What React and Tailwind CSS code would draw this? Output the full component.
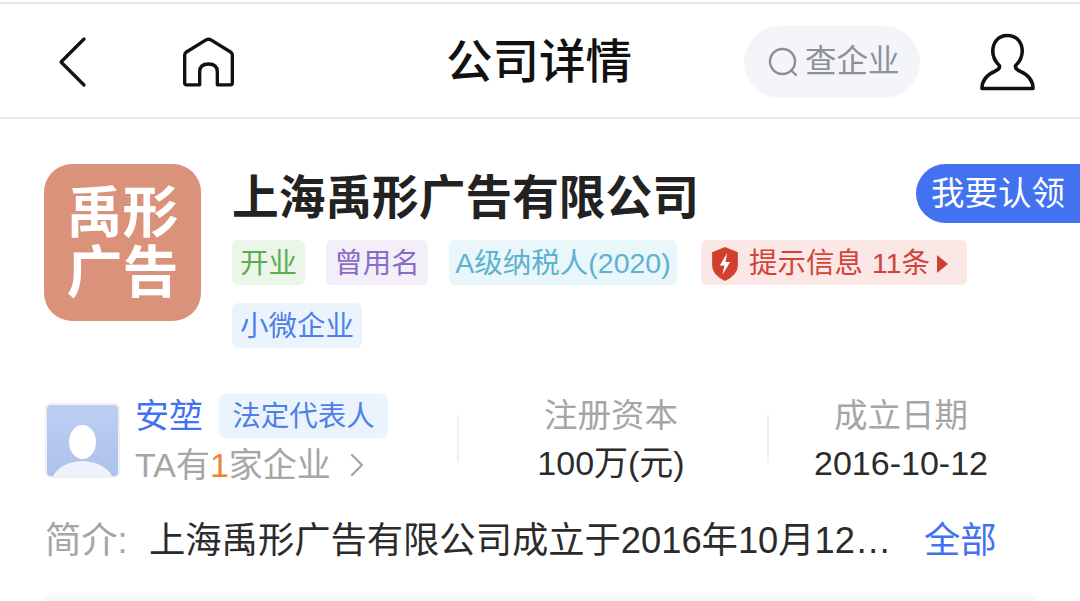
const Tag = ({ className, children }) => (
  <span className={`flex h-[45px] items-center rounded-md pt-[2px] text-[28.5px] leading-none ${className}`}>
    {children}
  </span>
);

const Stat = ({ label, value }) => (
  <div className="flex flex-col items-center pt-[2px]">
    <span className="text-[33.5px] leading-[40px] whitespace-nowrap text-[#a6a6a6]">{label}</span>
    <span className="mt-[7px] text-[34px] leading-[40px] whitespace-nowrap text-[#2b2b2b]">{value}</span>
  </div>
);

const App = () => {
  return (
    <div
      className="h-[601px] w-[1080px] overflow-hidden bg-white"
      style={{ fontFamily: '"Liberation Sans", "Noto Sans CJK SC", sans-serif' }}
    >
      <div className="mt-[2px] h-[2px] bg-[#e8e8e8]" />

      {/* Top nav */}
      <div className="flex h-[115px] items-center border-b-2 border-[#ebebeb] pl-[57px] pt-[3px]">
        <svg width="32" height="52" viewBox="0 0 32 52" fill="none" stroke="#111" strokeWidth="3.2" strokeLinecap="round" strokeLinejoin="round">
          <path d="M27 3 L4 26 L27 49" />
        </svg>
        <svg className="ml-[94px]" width="51" height="50" viewBox="0 0 52 50" fill="none" stroke="#111" strokeWidth="3.4" strokeLinejoin="round">
          <path d="M1.7 18 Q1.7 16 3.5 14.8 L23.5 2.5 Q26 1 28.5 2.5 L48.5 14.8 Q50.3 16 50.3 18 L50.3 46.5 Q50.3 48.3 48.5 48.3 L35 48.3 L35 35 Q35 27 26 27 Q17 27 17 35 L17 48.3 L3.5 48.3 Q1.7 48.3 1.7 46.5 Z" />
        </svg>
        <span className="ml-[212px] w-[188px] text-[46.5px] font-medium leading-none whitespace-nowrap text-[#111]">公司详情</span>
        <div className="ml-[110px] flex h-[72px] w-[176px] items-center rounded-full bg-[#f4f5f9] pl-[24px]">
          <svg width="31" height="31" viewBox="0 0 31 31" fill="none" stroke="#8c8e96" strokeWidth="2.4" strokeLinecap="round">
            <circle cx="14.5" cy="14.5" r="12.5" />
            <path d="M23.5 23.5 L28 28" />
          </svg>
          <span className="ml-[6px] text-[31.5px] leading-none whitespace-nowrap text-[#8f9198]">查企业</span>
        </div>
        <svg className="ml-[59px]" width="57" height="58" viewBox="0 0 58 58" fill="none" stroke="#111" strokeWidth="3.6" strokeLinejoin="round">
          <path d="M29 2 C18 2 14 11 14 18 C14 26 18 30 21 33 C21 36 19 37 16 38.5 C8 42 3 48 3 56 L55 56 C55 48 50 42 42 38.5 C39 37 37 36 37 33 C40 30 44 26 44 18 C44 11 40 2 29 2 Z" />
        </svg>
      </div>

      {/* Company header */}
      <div className="flex pl-[44px] pt-[45px]">
        <div className="flex h-[157px] w-[157px] shrink-0 flex-col items-center justify-center rounded-[28px] bg-[#da927a] text-[56px] font-bold leading-[60px] text-white">
          <span>禹形</span>
          <span>广告</span>
        </div>
        <div className="ml-[31px] min-w-0 flex-1">
          <div className="flex h-[59px] items-start justify-between">
            <span className="mt-[4px] text-[46.7px] font-bold leading-[60px] whitespace-nowrap text-[#222]">上海禹形广告有限公司</span>
            <span className="flex h-[59px] w-[164px] items-center rounded-l-[30px] bg-[#4272f0] pl-[15px] text-[33.5px] leading-none whitespace-nowrap text-white">我要认领</span>
          </div>
          <div className="mt-[17px] flex flex-wrap gap-x-[21px] gap-y-[18px]">
            <Tag className="w-[73px] justify-center bg-[#ebf5ea] text-[#5bae4f]">开业</Tag>
            <Tag className="w-[102px] justify-center bg-[#f2eff8] text-[#8a6cc7]">曾用名</Tag>
            <Tag className="w-[228px] justify-center bg-[#e9f6fa] text-[#5bb3d0]">A级纳税人(2020)</Tag>
            <Tag className="ml-[3px] w-[266px] bg-[#fae7e6] pl-[10px] text-[#d0443a]">
              <svg width="28" height="34" viewBox="0 0 27 33" className="shrink-0">
                <path d="M13.5 0 L26 5 L26 18 Q26 27 13.5 33 Q1 27 1 18 L1 5 Z" fill="#d0402f" />
                <path d="M15.5 6 L8.5 18 L13 18 L11 27 L18.5 14.5 L14 14.5 Z" fill="#fff" />
              </svg>
              <span className="ml-[10px] whitespace-nowrap">提示信息</span>
              <span className="ml-[9px] whitespace-nowrap">11条</span>
              <svg className="ml-[7px] shrink-0" width="11" height="18" viewBox="0 0 11 18">
                <path d="M0 0 L11 9 L0 18 Z" fill="#d0402f" />
              </svg>
            </Tag>
            <Tag className="h-[44px] w-[130px] justify-center bg-[#ebf4fd] text-[#4f7fe8]">小微企业</Tag>
          </div>
        </div>
      </div>

      {/* Legal rep and stats */}
      <div className="mt-[46px] flex items-start pl-[45px]">
        <div className="mt-[9px] flex h-[75px] w-[75px] shrink-0 items-end justify-center overflow-hidden rounded-md border-2 border-[#eef0f3] bg-gradient-to-b from-[#bccff3] to-[#adc2ea]">
          <svg width="71" height="71" viewBox="0 0 71 71">
            <path d="M6 71 Q14 57 35.5 56 Q57 57 65 71 Z" fill="#eef3fb" />
            <ellipse cx="35.5" cy="37" rx="13.5" ry="17" fill="#ffffff" />
          </svg>
        </div>
        <div className="ml-[15px] w-[322px]">
          <div className="flex items-center">
            <span className="text-[34px] leading-[44px] text-[#4272f0]">安堃</span>
            <span className="ml-[16px] flex h-[44px] w-[169px] items-center justify-center rounded-md bg-[#ebf4fd] text-[28.5px] leading-none whitespace-nowrap text-[#4f7fe8]">法定代表人</span>
          </div>
          <div className="mt-[9px] flex items-center text-[34px] leading-[36px] text-[#a6a6a6]">
            <span>TA有</span>
            <span className="text-[#ee8336]">1</span>
            <span>家企业</span>
            <svg className="ml-[19px]" width="14" height="24" viewBox="0 0 14 24" fill="none" stroke="#a6a6a6" strokeWidth="2.4" strokeLinecap="round" strokeLinejoin="round">
              <path d="M2 2 L12 12 L2 22" />
            </svg>
          </div>
        </div>
        <div className="mt-[21px] h-[47px] w-[2px] bg-[#f0f0f0]" />
        <div className="flex w-[308px] justify-center pr-[4px]">
          <Stat label="注册资本" value="100万(元)" />
        </div>
        <div className="mt-[21px] h-[47px] w-[2px] bg-[#f0f0f0]" />
        <div className="flex w-[264px] justify-center">
          <Stat label="成立日期" value="2016-10-12" />
        </div>
      </div>

      {/* Intro */}
      <div className="mt-[36px] flex h-[44px] items-center pl-[45px] text-[36.3px] leading-none">
        <span className="w-[104px] shrink-0 text-[#a6a6a6]">简介:</span>
        <span className="w-[743px] whitespace-nowrap text-[#2b2b2b]">上海禹形广告有限公司成立于2016年10月12…</span>
        <span className="ml-[32px] whitespace-nowrap text-[#4272f0]">全部</span>
      </div>

      <div className="mx-[44px] mt-[28px] h-[11px] bg-gradient-to-b from-white to-[#f3f4f8]" />
    </div>
  );
};

export default App;
